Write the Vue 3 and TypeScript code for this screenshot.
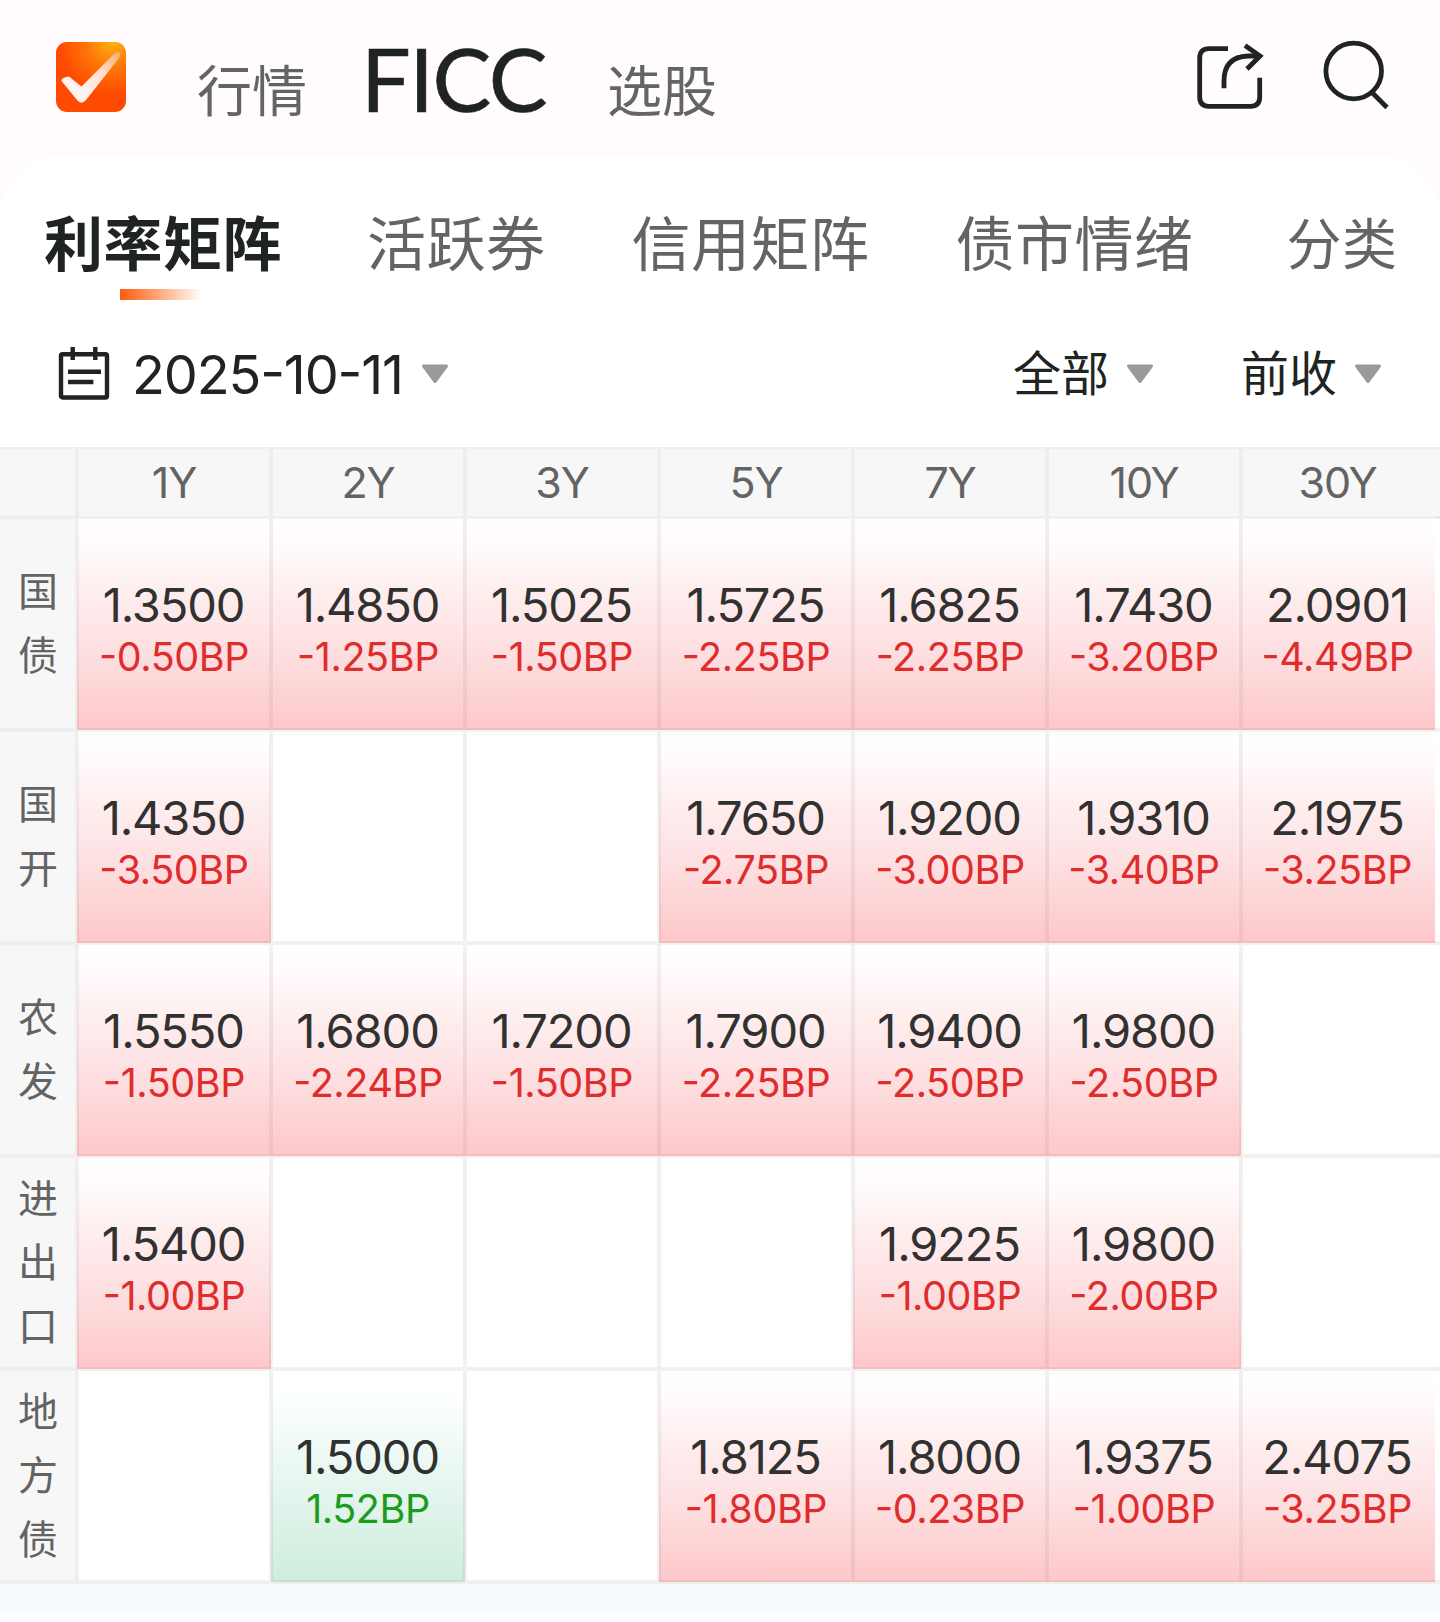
<script setup lang="ts">
interface Quote {
  rate: string
  change: string
}
interface BondRow {
  name: string[]
  quotes: (Quote | null)[]
}

const terms: string[] = ['1Y', '2Y', '3Y', '5Y', '7Y', '10Y', '30Y']

const q = (rate: string, change: string): Quote => ({ rate, change: change + 'BP' })

const rows: BondRow[] = [
  {
    name: ['国', '债'],
    quotes: [
      q('1.3500', '-0.50'), q('1.4850', '-1.25'), q('1.5025', '-1.50'), q('1.5725', '-2.25'),
      q('1.6825', '-2.25'), q('1.7430', '-3.20'), q('2.0901', '-4.49'),
    ],
  },
  {
    name: ['国', '开'],
    quotes: [
      q('1.4350', '-3.50'), null, null, q('1.7650', '-2.75'),
      q('1.9200', '-3.00'), q('1.9310', '-3.40'), q('2.1975', '-3.25'),
    ],
  },
  {
    name: ['农', '发'],
    quotes: [
      q('1.5550', '-1.50'), q('1.6800', '-2.24'), q('1.7200', '-1.50'), q('1.7900', '-2.25'),
      q('1.9400', '-2.50'), q('1.9800', '-2.50'), null,
    ],
  },
  {
    name: ['进', '出', '口'],
    quotes: [
      q('1.5400', '-1.00'), null, null, null,
      q('1.9225', '-1.00'), q('1.9800', '-2.00'), null,
    ],
  },
  {
    name: ['地', '方', '债'],
    quotes: [
      null, q('1.5000', '1.52'), null, q('1.8125', '-1.80'),
      q('1.8000', '-0.23'), q('1.9375', '-1.00'), q('2.4075', '-3.25'),
    ],
  },
]

const tone = (item: Quote | null): string =>
  !item ? '' : item.change.startsWith('-') ? 'down' : 'up'
</script>

<template>
  <div class="page">
    <header class="top">
      <svg class="logo" width="70" height="70" viewBox="0 0 70 70">
        <defs>
          <radialGradient id="logoBg" cx="0.8" cy="0" r="0.75">
            <stop offset="0" stop-color="#ffb30f" />
            <stop offset="0.45" stop-color="#ff7a08" />
            <stop offset="1" stop-color="#ff4a02" />
          </radialGradient>
          <linearGradient id="tick" x1="0.1" y1="0.9" x2="1" y2="0">
            <stop offset="0.2" stop-color="#fff3ee" />
            <stop offset="0.6" stop-color="#ffe0cf" />
            <stop offset="1" stop-color="#ffa565" />
          </linearGradient>
        </defs>
        <rect width="70" height="70" rx="11" fill="url(#logoBg)" />
        <path
          d="M5.5 39Q5 37 8 35.7L12 34.5Q14.5 34.5 16 37L25.5 44.5L59 11Q63 8.500 64.300 11Q64.500 14 61.500 18L30 58Q25.500 63 21.500 58.500Z"
          fill="url(#tick)"
        />
      </svg>
      <span class="nav quotes">行情</span>
      <span class="nav current">FICC</span>
      <span class="nav picks">选股</span>
      <svg class="share" width="70" height="72" viewBox="0 0 70 72">
        <path d="M33 8.7H14Q4.7 8.7 4.7 18V57Q4.7 66.3 14 66.3H55.4Q64.7 66.3 64.7 57V37.7" />
        <path d="M29 48.3V41Q29 17 53 16H64" />
        <path d="M50 5.5L65 16L52 29" />
      </svg>
      <svg class="search" width="70" height="72" viewBox="0 0 70 72">
        <circle cx="33.7" cy="31" r="27.8" />
        <path d="M52 52.5L67 67.5" />
      </svg>
    </header>

    <main class="panel">
      <nav class="tabs">
        <span class="tab active">利率矩阵</span>
        <span class="tab t2">活跃券</span>
        <span class="tab t3">信用矩阵</span>
        <span class="tab t4">债市情绪</span>
        <span class="tab t5">分类</span>
      </nav>

      <div class="filters">
        <svg class="cal" width="54" height="56" viewBox="0 0 54 56">
          <rect x="4" y="9.3" width="46" height="43.2" rx="1.5" />
          <path d="M15.7 2V15M38.3 2V15M11 26.7H44M11 37H36.4" />
        </svg>
        <span class="date">2025-10-11</span>
        <svg class="caret c1" width="28" height="20" viewBox="0 0 28 20">
          <path d="M2.5 2H25.5L14 17.5Z" />
        </svg>
        <span class="pick p1">全部</span>
        <svg class="caret c2" width="28" height="20" viewBox="0 0 28 20">
          <path d="M2.5 2H25.5L14 17.5Z" />
        </svg>
        <span class="pick p2">前收</span>
        <svg class="caret c2" width="28" height="20" viewBox="0 0 28 20">
          <path d="M2.5 2H25.5L14 17.5Z" />
        </svg>
      </div>

      <section class="matrix">
        <div class="row head">
          <div class="cell side"></div>
          <div v-for="t in terms" :key="t" class="cell term">{{ t }}</div>
          <div class="cell rest"></div>
        </div>
        <div v-for="(r, i) in rows" :key="i" class="row">
          <div class="cell side">
            <span v-for="c in r.name" :key="c">{{ c }}</span>
          </div>
          <div v-for="(item, j) in r.quotes" :key="j" class="cell quote" :class="tone(item)">
            <template v-if="item">
              <span class="rate">{{ item.rate }}</span>
              <span class="change">{{ item.change }}</span>
            </template>
          </div>
          <div class="cell rest"></div>
        </div>
      </section>
    </main>
    <div class="strip"></div>
  </div>
</template>

<style>
body {
  margin: 0;
  background: #fff;
}
</style>

<style scoped>
.page {
  width: 1440px;
  height: 1622px;
  overflow: hidden;
  background: linear-gradient(#fffbff 0 300px, #fff 300px);
  font-family: 'Noto Sans CJK SC', 'Noto Sans', sans-serif;
  color: #202421;
}
.page * {
  box-sizing: border-box;
}
.top {
  display: flex;
  align-items: flex-start;
  height: 156px;
  white-space: nowrap;
}
.logo {
  margin: 42px 0 0 56px;
}
.nav {
  height: 80px;
  line-height: 80px;
  font-size: 55px;
  color: #636563;
}
.quotes {
  width: 110px;
  margin: 47px 0 0 71px;
}
.current {
  width: 190px;
  margin: 38px 0 0 54px;
  font-family: Lato, sans-serif;
  font-weight: 400;
  font-size: 88px;
  letter-spacing: -1.4px;
  color: #202421;
  -webkit-text-stroke: 0.6px #202421;
}
.picks {
  width: 110px;
  margin: 47px 0 0 56px;
}
.share,
.search {
  flex: none;
  fill: none;
  stroke: #202421;
  stroke-width: 4.8;
}
.share {
  margin: 40px 0 0 478px;
}
.search {
  margin: 40px 0 0 55px;
}
.panel {
  height: 1428px;
  background: #fff;
  border-radius: 60px 60px 0 0;
}
.tabs {
  display: flex;
  height: 144px;
  padding: 43px 0 0 44px;
  white-space: nowrap;
}
.tab {
  flex: none;
  height: 84px;
  line-height: 84px;
  font-size: 59px;
  letter-spacing: 0.5px;
  color: #636563;
}
.active {
  position: relative;
  width: 238px;
  font-weight: 700;
  color: #202421;
}
.active::after {
  content: '';
  position: absolute;
  left: 76px;
  top: 90px;
  width: 82px;
  height: 11px;
  background: linear-gradient(90deg, #ff5a0a, #fff);
}
.t2 {
  margin-left: 85px;
}
.t3 {
  margin-left: 86px;
}
.t4 {
  margin-left: 86px;
}
.t5 {
  margin-left: 93px;
  line-height: 82px;
  font-size: 55px;
}
.filters {
  display: flex;
  height: 147px;
  padding: 45px 0 0 57px;
  white-space: nowrap;
}
.cal {
  flex: none;
  fill: none;
  stroke: #202421;
  stroke-width: 4.4;
}
.date {
  width: 270px;
  height: 60px;
  margin-left: 21px;
  line-height: 60px;
  font-family: Inter, sans-serif;
  font-size: 54px;
  letter-spacing: -1.15px;
  font-feature-settings: 'case';
}
.caret {
  flex: none;
  margin-top: 19px;
  fill: #9b999b;
  stroke: #9b999b;
  stroke-width: 3;
  stroke-linejoin: round;
}
.c1 {
  margin-left: 19px;
}
.pick {
  width: 98px;
  height: 60px;
  line-height: 60px;
  margin-top: -5px;
  font-size: 48px;
}
.p1 {
  margin-left: 564px;
}
.p2 {
  margin-left: 87px;
}
.c2 {
  margin-left: 15px;
}
.matrix {
  border-bottom: 2px solid #f0efef;
}
.row {
  display: grid;
  grid-template-columns: 77px repeat(7, 194px) 5px;
  height: 213px;
}
.head {
  height: 70px;
}
.cell {
  border: 2px solid rgba(15, 0, 0, 0.06);
}
.side {
  display: flex;
  flex-direction: column;
  align-items: center;
  justify-content: center;
  padding: 0 0 6px 1px;
  border-color: rgba(15, 0, 0, 0.036);
  border-left: 0;
  background: #f7f7f7;
  font-size: 40px;
  line-height: 64px;
  color: #636363;
}
.term {
  border-color: rgba(15, 0, 0, 0.036);
  background: #f7f7f7;
  font-family: Inter, sans-serif;
  font-size: 43px;
  letter-spacing: -1.2px;
  line-height: 67px;
  text-align: center;
  color: #636363;
}
.cell:nth-last-child(2) {
  padding-right: 3px;
  border-right: 0;
}
.rest {
  border-left: 0;
  border-right: 0;
}
.head .rest {
  border-color: rgba(15, 0, 0, 0.036);
  background: #f7f7f7;
}
.quote {
  display: flex;
  flex-direction: column;
  align-items: center;
  padding-top: 58px;
  border-color: rgba(15, 0, 0, 0.055);
  background-origin: border-box;
  font-family: Inter, sans-serif;
  font-feature-settings: 'case';
}
.rate {
  height: 56px;
  margin-right: 1px;
  line-height: 56px;
  font-size: 47px;
  letter-spacing: -1.1px;
  color: #303130;
}
.change {
  height: 46px;
  line-height: 48px;
  font-size: 39.5px;
  letter-spacing: -0.4px;
}
.down {
  background-image: linear-gradient(#fff 0%, #fffbfd 13%, #feeeee 35%, #fee3e5 57%, #fdd5d6 80%, #ffc7ca 100%);
}
.down .change {
  color: #df2c2c;
}
.up {
  background-image: linear-gradient(#fff 10%, #f7fdfc 22%, #ebf8f2 45%, #dff3ea 68%, #cdeddb 100%);
}
.up .change {
  color: #1d9b1d;
}
.strip {
  height: 29px;
  background: #f5fbff;
}
</style>
